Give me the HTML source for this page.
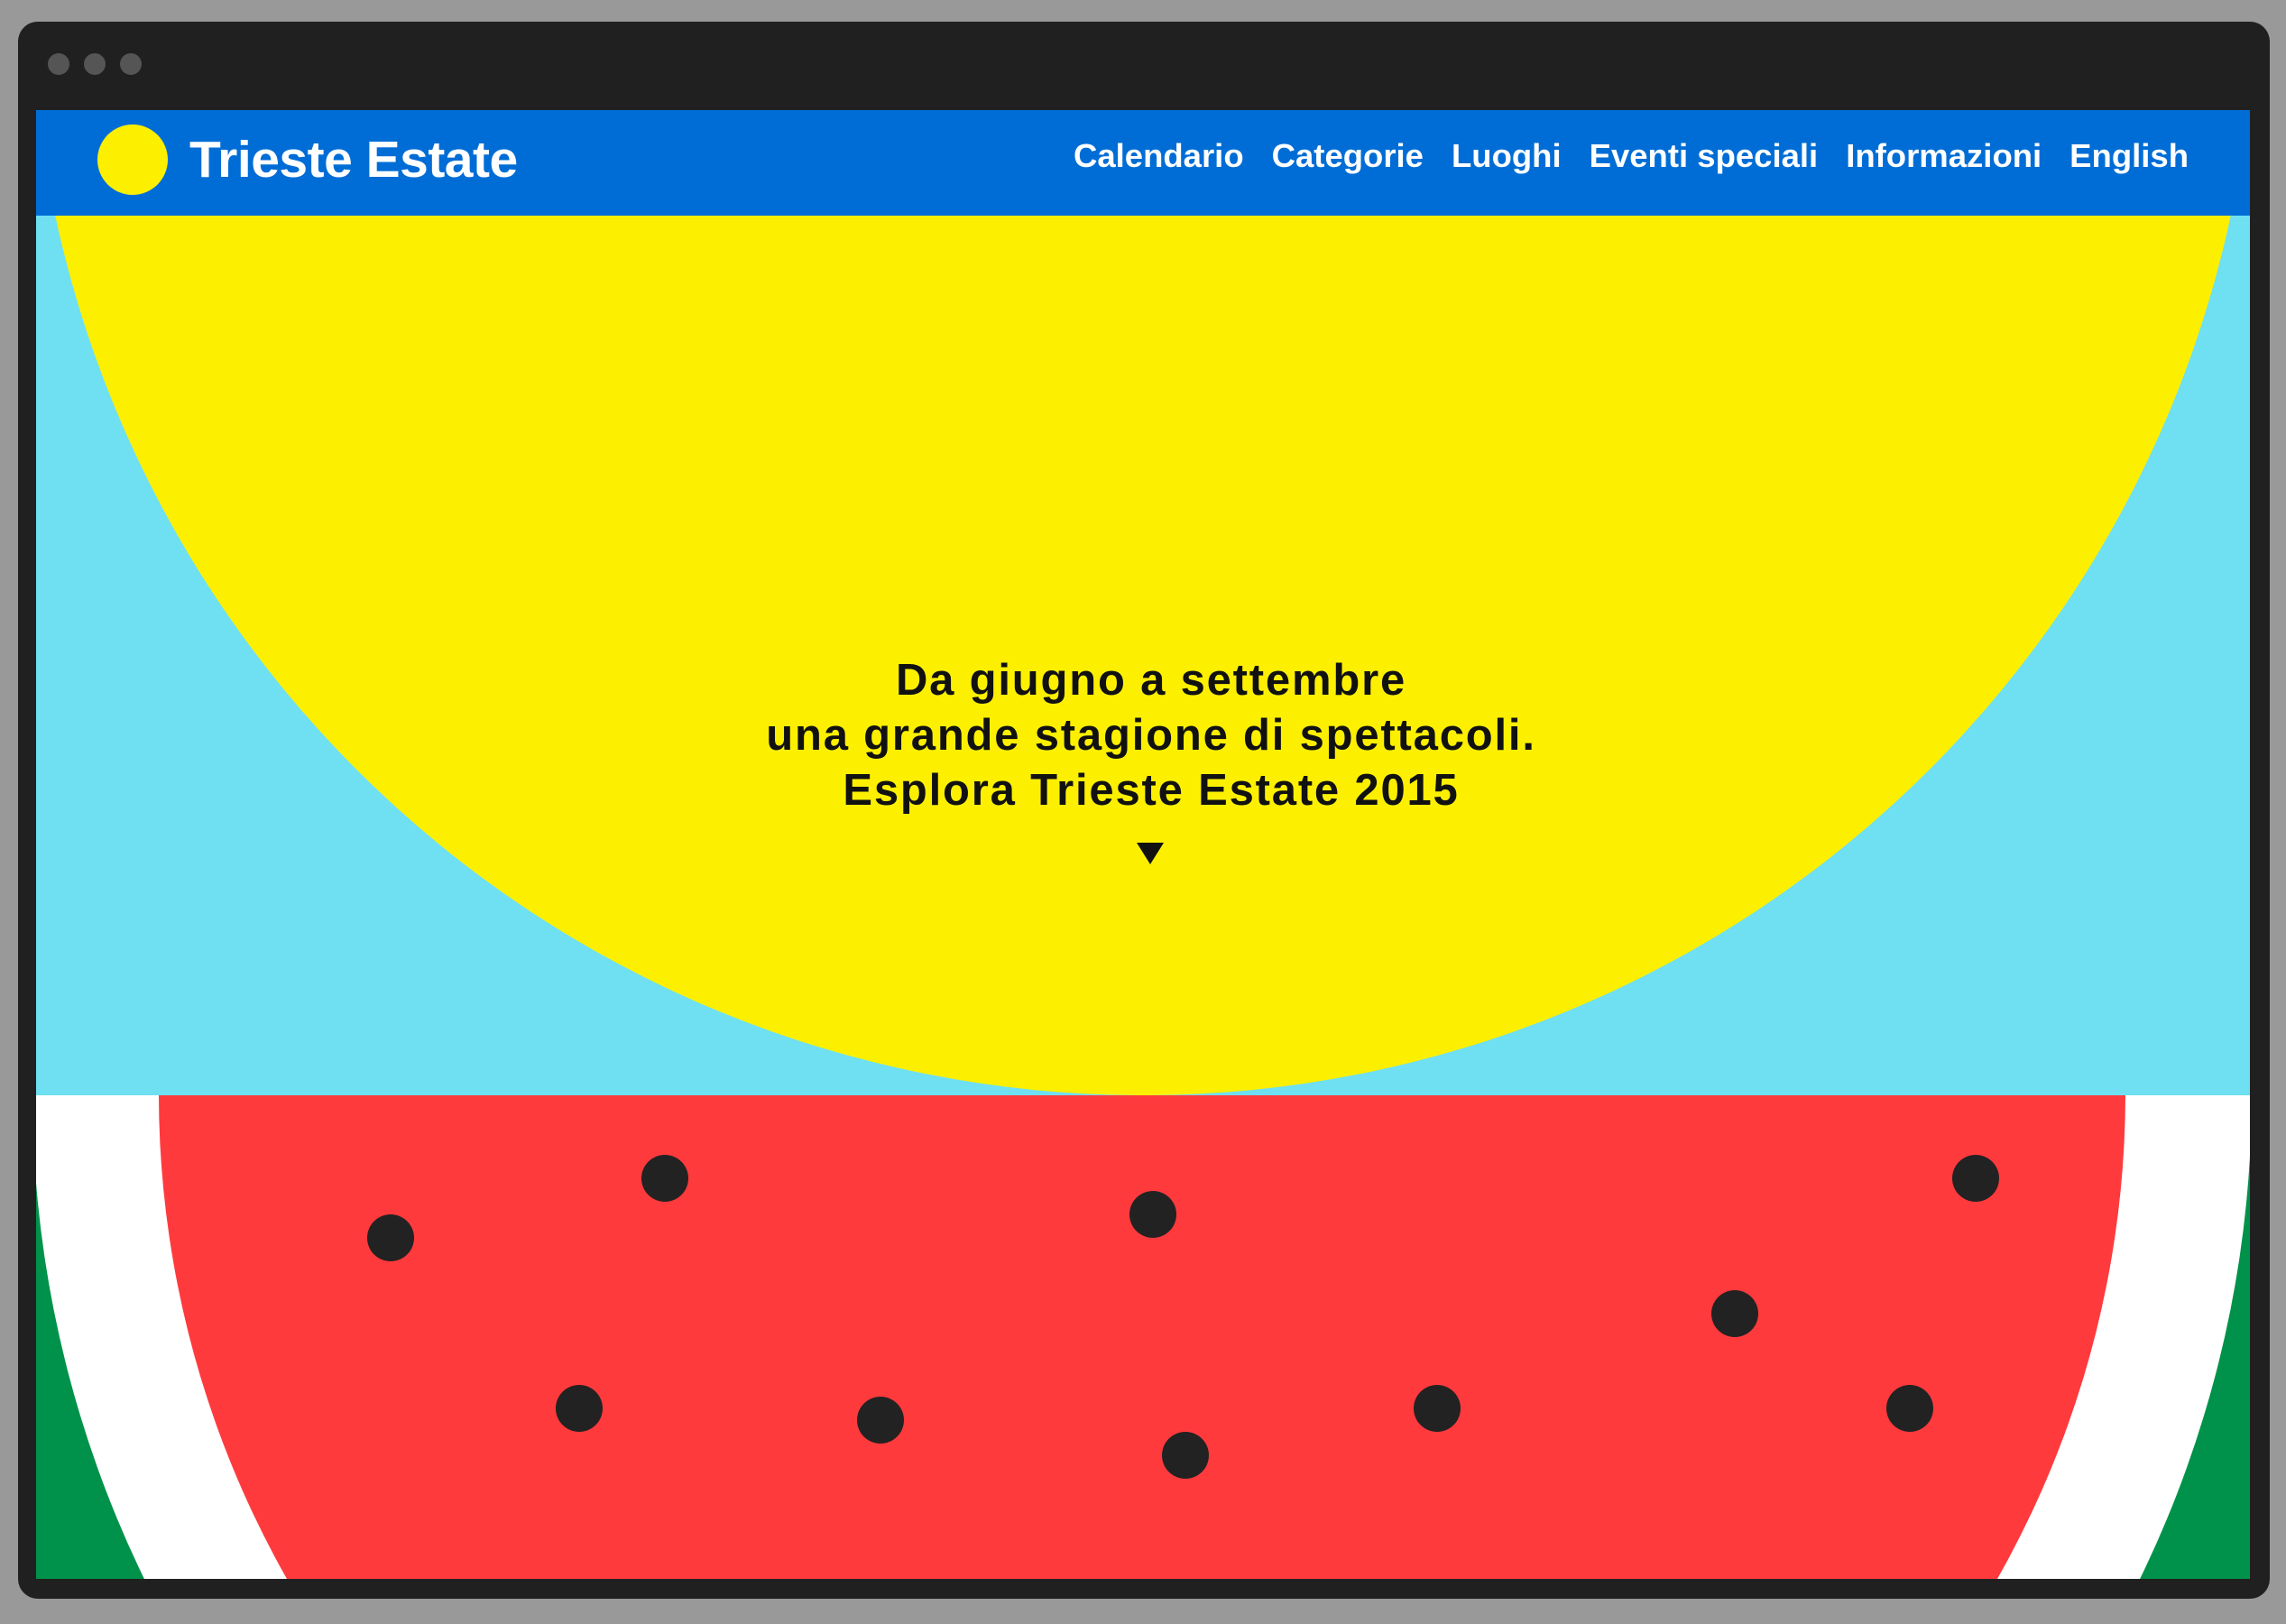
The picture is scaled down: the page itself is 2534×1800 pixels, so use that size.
<!DOCTYPE html>
<html><head><meta charset="utf-8"><style>
html,body{margin:0;padding:0;width:2534px;height:1800px;background:#999;overflow:hidden;position:relative}
.frame{position:absolute;left:20px;top:24px;width:2496px;height:1748px;background:#202020;border-radius:22px}
.dot{position:absolute;top:59px;width:24px;height:24px;border-radius:50%;background:#555}
.content{position:absolute;left:40px;top:122px;width:2454px;height:1628px;overflow:hidden}
.hdr{position:absolute;left:0;top:0;width:2454px;height:117px;background:#006dd6}
.logo{position:absolute;left:68px;top:16px;width:78px;height:78px;border-radius:50%;background:#fcf000}
.title{position:absolute;left:170px;top:20px;font:bold 57px/70px "Liberation Sans",sans-serif;color:#fff;letter-spacing:-0.5px;white-space:nowrap}
.nav{position:absolute;right:68px;top:24px;font:bold 36.5px/54px "Liberation Sans",sans-serif;color:#fff;white-space:nowrap}
.nav span{margin-left:31px}
.hero{position:absolute;left:0;top:0}
.txt{position:absolute;left:9px;width:2454px;top:602px;text-align:center;font:bold 49px/61px "Liberation Sans",sans-serif;color:#111;letter-spacing:1.8px}
</style></head><body>
<div class="frame"></div>
<div class="dot" style="left:53px"></div>
<div class="dot" style="left:93px"></div>
<div class="dot" style="left:133px"></div>
<div class="content">
<svg class="hero" width="2454" height="1628" viewBox="40 122 2454 1628">
<rect x="40" y="239" width="2454" height="975" fill="#6fdff2"/>
<circle cx="1267" cy="-19" r="1233" fill="#fcf000"/>
<rect x="40" y="1214" width="2454" height="540" fill="#00924a"/>
<clipPath id="c"><rect x="40" y="1214" width="2454" height="540"/></clipPath>
<g clip-path="url(#c)">
<circle cx="1266" cy="1212" r="1230" fill="#fff"/>
<circle cx="1266" cy="1212" r="1090" fill="#ff3a3d"/>
</g>
<g fill="#222">
<circle cx="433" cy="1372" r="26"/><circle cx="737" cy="1306" r="26"/>
<circle cx="1278" cy="1346" r="26"/><circle cx="2190" cy="1306" r="26"/>
<circle cx="1923" cy="1456" r="26"/><circle cx="642" cy="1561" r="26"/>
<circle cx="976" cy="1574" r="26"/><circle cx="1314" cy="1613" r="26"/>
<circle cx="1593" cy="1561" r="26"/><circle cx="2117" cy="1561" r="26"/>
</g>
<polygon points="1260,934 1290,934 1275,958" fill="#111"/>
</svg>
<div class="hdr">
<div class="logo"></div>
<div class="title">Trieste Estate</div>
<div class="nav"><span>Calendario</span><span>Categorie</span><span>Luoghi</span><span>Eventi speciali</span><span>Informazioni</span><span>English</span></div>
</div>
<div class="txt">Da giugno a settembre<br>una grande stagione di spettacoli.<br>Esplora Trieste Estate 2015</div>
</div>
</body></html>
